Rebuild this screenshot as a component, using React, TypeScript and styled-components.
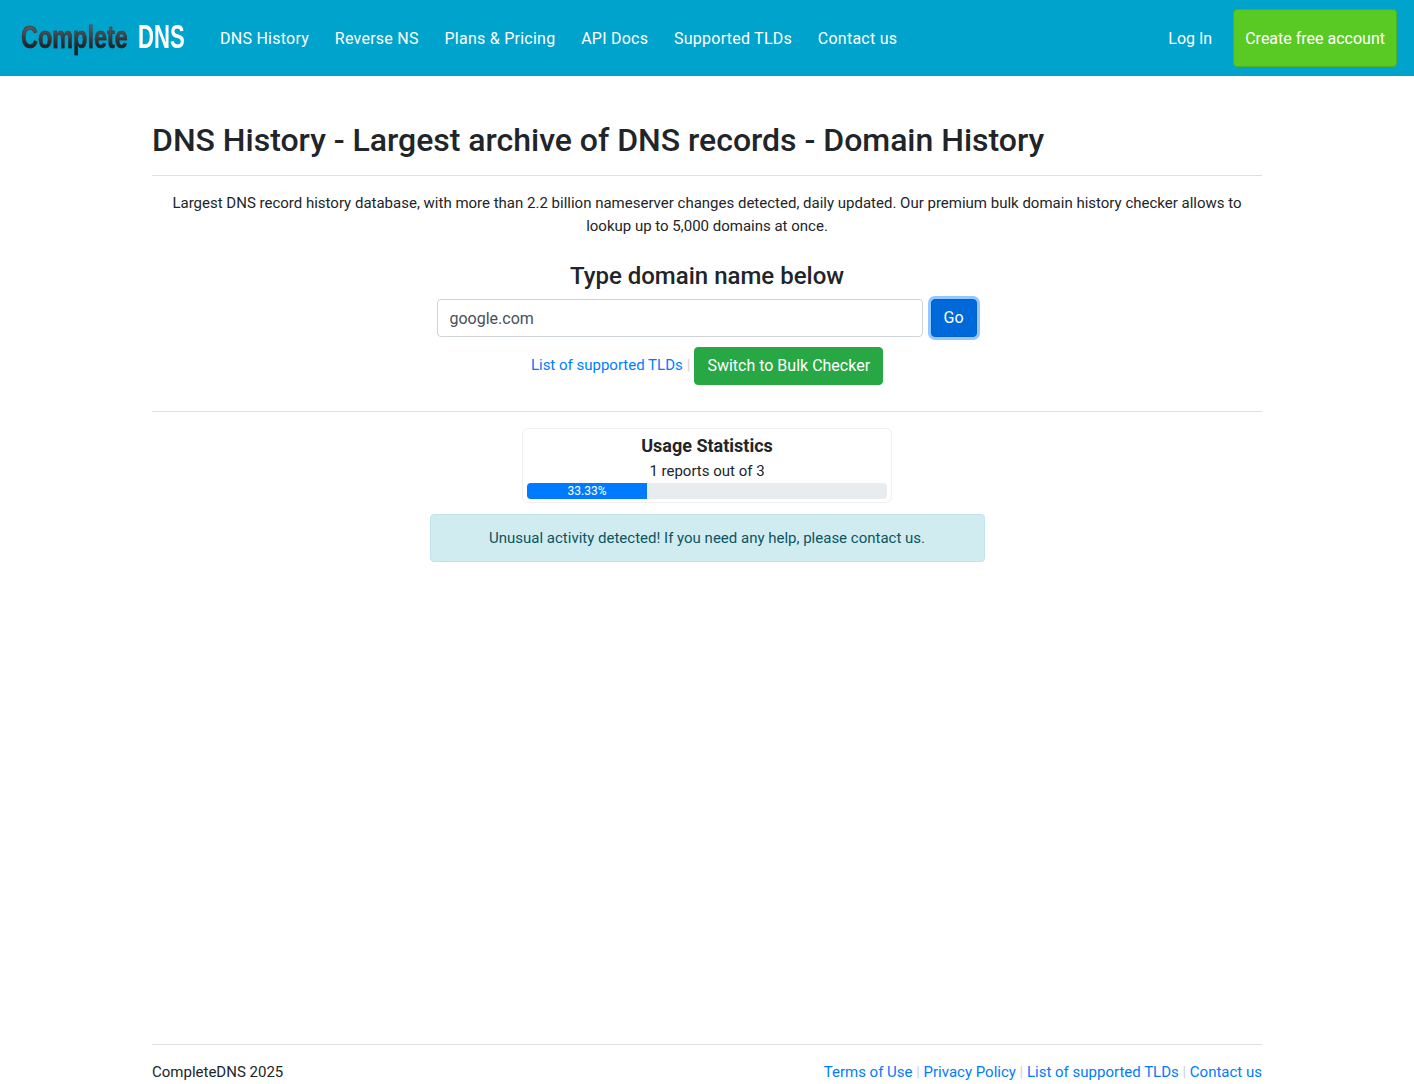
import styled, { createGlobalStyle } from "styled-components";

const navLinks = ["DNS History", "Reverse NS", "Plans & Pricing", "API Docs", "Supported TLDs", "Contact us"];
const footerLinks = ["Terms of Use", "Privacy Policy", "List of supported TLDs", "Contact us"];

const GlobalStyle = createGlobalStyle`
  * {
    box-sizing: border-box;
  }

  html,
  body {
    margin: 0;
    background: #fff;
  }

  body {
    font-family: Roboto, "Liberation Sans", sans-serif;
    font-size: 15px;
    line-height: 1.5;
    color: #212529;
  }
`;

function App() {
  return (
    <StPage>
      <GlobalStyle />
      <StNavbar>
        <StLogo>
          <StLogoDark>Complete</StLogoDark>
          <StLogoLight>DNS</StLogoLight>
        </StLogo>
        <StNavList>
          {navLinks.map((link) => (
            <StNavLink key={link} href="#">
              {link}
            </StNavLink>
          ))}
        </StNavList>
        <StNavRight>
          <StLogin href="#">Log In</StLogin>
          <StCreateBtn href="#">Create free account</StCreateBtn>
        </StNavRight>
      </StNavbar>

      <StContainer>
        <StTitle>DNS History - Largest archive of DNS records - Domain History</StTitle>
        <StRule />
        <StIntro>
          Largest DNS record history database, with more than 2.2 billion nameserver changes detected, daily updated.
          Our premium bulk domain history checker allows to lookup up to 5,000 domains at once.
        </StIntro>
        <StFormTitle>Type domain name below</StFormTitle>
        <StSearchRow>
          <StInput defaultValue="google.com" />
          <StGoBtn>Go</StGoBtn>
        </StSearchRow>
        <StLinksRow>
          <StRowLink href="#">List of supported TLDs</StRowLink>
          <StSep>|</StSep>
          <StBulkBtn>Switch to Bulk Checker</StBulkBtn>
        </StLinksRow>
        <StRuleLower />
        <StUsageCard>
          <StUsageTitle>Usage Statistics</StUsageTitle>
          <StUsageText>1 reports out of 3</StUsageText>
          <StProgress>
            <StProgressBar style={{ width: `${(1 / 3) * 100}%` }}>33.33%</StProgressBar>
          </StProgress>
        </StUsageCard>
        <StAlert>Unusual activity detected! If you need any help, please contact us.</StAlert>
      </StContainer>

      <StFooter>
        <StFooterInner>
          <span>CompleteDNS 2025</span>
          <StFooterLinks>
            {footerLinks.map((link, i) => (
              <span key={link}>
                {i > 0 && <StFooterSep>|</StFooterSep>}
                <StLink href="#">{link}</StLink>
              </span>
            ))}
          </StFooterLinks>
        </StFooterInner>
      </StFooter>
    </StPage>
  );
}

const StPage = styled.div`
  display: flex;
  flex-direction: column;
  height: 1084px;
  overflow: hidden;
`;

const StNavbar = styled.nav`
  display: flex;
  align-items: center;
  flex: none;
  height: 76px;
  padding: 0 17px 0 21px;
  background: #00a3cc;
`;

const StLogo = styled.div`
  display: flex;
  align-items: center;
  width: 164px;
  height: 40px;
  margin: 0 22px 2px 0;
  font-family: "Liberation Sans", Arial, sans-serif;
  font-weight: 700;
  white-space: nowrap;
`;

const StLogoDark = styled.span`
  display: inline-block;
  flex: none;
  width: 146px;
  margin-right: -29px;
  font-size: 32px;
  line-height: 40px;
  transform: scaleX(0.733);
  transform-origin: left center;
  background: linear-gradient(#5a6066 20%, #1f2327 75%);
  background-clip: text;
  -webkit-background-clip: text;
  color: transparent;
  -webkit-text-stroke: 0.4px rgba(40, 44, 48, 0.8);
`;

const StLogoLight = styled.span`
  display: inline-block;
  flex: none;
  width: 70px;
  margin-right: -23px;
  font-size: 33px;
  line-height: 40px;
  transform: scaleX(0.67);
  transform-origin: left center;
  color: #fff;
`;

const StNavList = styled.div`
  display: flex;
  gap: 25.75px;
  padding: 1px 0 0 13px;
`;

const StNavLink = styled.a`
  font-size: 16px;
  line-height: 24px;
  letter-spacing: 0.25px;
  color: #fff;
  text-decoration: none;
`;

const StNavRight = styled.div`
  display: flex;
  align-items: center;
  gap: 21px;
  margin-left: auto;
`;

const StLogin = styled.a`
  padding-top: 1px;
  font-size: 16px;
  line-height: 24px;
  color: #fff;
  text-decoration: none;
`;

const StCreateBtn = styled.a`
  display: flex;
  align-items: center;
  height: 58px;
  padding: 1px 11px 0;
  font-size: 16px;
  color: #fff;
  text-decoration: none;
  background: #59c924;
  border: 1px solid #4cb31d;
  border-radius: 4px;
`;

const StContainer = styled.main`
  display: flex;
  flex-direction: column;
  align-items: center;
  flex: 1;
  width: 1110px;
  margin: 0 auto;
  padding-top: 45px;
`;

const StTitle = styled.h1`
  align-self: stretch;
  margin: 0;
  font-size: 32px;
  font-weight: 500;
  line-height: 38px;
  letter-spacing: -0.015px;
`;

const StRule = styled.hr`
  align-self: stretch;
  margin: 16px 0 16px;
  border: 0;
  border-top: 1px solid #dfdfdf;
`;

const StRuleLower = styled(StRule)`
  margin: 26px 0 16px;
`;

const StIntro = styled.p`
  width: 1080px;
  margin: 0;
  font-size: 15px;
  line-height: 23px;
  text-align: center;
`;

const StFormTitle = styled.h2`
  margin: 24px 0 8px;
  font-size: 24px;
  font-weight: 500;
  line-height: 29px;
`;

const StSearchRow = styled.div`
  display: flex;
  align-items: center;
  gap: 8px;
  height: 38px;
`;

const StInput = styled.input`
  width: 486px;
  height: 38px;
  padding: 6px 12px;
  font-family: inherit;
  font-size: 16px;
  color: #495057;
  background: #fff;
  border: 1px solid #ced4da;
  border-radius: 4px;
  outline: none;
`;

const StGoBtn = styled.button`
  width: 46px;
  height: 38px;
  margin-right: 1px;
  padding: 0 0 1px;
  font-family: inherit;
  font-size: 16px;
  color: #fff;
  background: #0069d9;
  border: 1px solid #0062cc;
  border-radius: 4px;
  box-shadow: 0 0 0 3px rgba(38, 143, 255, 0.5);
`;

const StLinksRow = styled.div`
  display: flex;
  align-items: center;
  margin-top: 10px;
  height: 38px;
`;

const StLink = styled.a`
  font-size: 15px;
  color: #007bff;
  text-decoration: none;
`;

const StRowLink = styled(StLink)`
  margin-bottom: 2px;
`;

const StSep = styled.span`
  margin: 0 4px 2px;
  font-size: 15px;
  color: #ced4da;
`;

const StBulkBtn = styled.button`
  height: 38px;
  padding: 0 12px 2px;
  font-family: inherit;
  font-size: 16px;
  color: #fff;
  background: #28a745;
  border: 1px solid #28a745;
  border-radius: 4px;
`;

const StUsageCard = styled.section`
  display: flex;
  flex-direction: column;
  align-items: center;
  width: 370px;
  height: 75px;
  padding: 4px;
  background: #fff;
  border: 1px solid #f0f0f0;
  border-radius: 6px;
`;

const StUsageTitle = styled.h3`
  margin: 0;
  font-size: 18px;
  font-weight: 700;
  line-height: 26px;
`;

const StUsageText = styled.div`
  margin-top: 1px;
  font-size: 15px;
  line-height: 23px;
`;

const StProgress = styled.div`
  align-self: stretch;
  flex: none;
  height: 16px;
  overflow: hidden;
  background: #e9ecef;
  border-radius: 4px;
`;

const StProgressBar = styled.div`
  height: 100%;
  font-size: 12px;
  line-height: 16px;
  color: #fff;
  text-align: center;
  background: #007bff;
`;

const StAlert = styled.div`
  width: 555px;
  height: 48px;
  margin-top: 11px;
  font-size: 15px;
  line-height: 46px;
  color: #0c5460;
  text-align: center;
  background: #d1ecf1;
  border: 1px solid #bee5eb;
  border-radius: 4px;
`;

const StFooter = styled.footer`
  flex: none;
  width: 1110px;
  margin: 0 auto;
  padding-top: 16px;
  border-top: 1px solid #dfdfdf;
`;

const StFooterInner = styled.div`
  display: flex;
  justify-content: space-between;
  height: 23px;
  font-size: 15px;
  line-height: 23px;
`;

const StFooterLinks = styled.div`
  display: flex;
`;

const StFooterSep = styled.span`
  margin: 0 3.7px;
  color: #ced4da;
`;

export default App;
